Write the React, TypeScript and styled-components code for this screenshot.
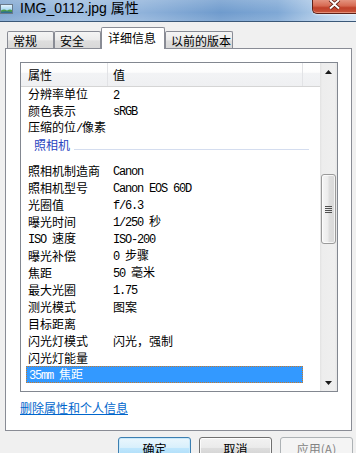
import React from "react";
import styled, { createGlobalStyle, css } from "styled-components";

const GlobalStyle = createGlobalStyle`
  html, body { margin: 0; padding: 0; }
  body {
    width: 356px;
    height: 453px;
    overflow: hidden;
    background: #f0f0f0;
    font-family: "Noto Sans CJK SC", "Liberation Sans", sans-serif;
    font-size: 12px;
    color: #000;
  }
`;

const Window = styled.div`
  width: 356px;
  height: 453px;
  display: flex;
  flex-direction: column;
  background: #f0f0f0;
`;

const TitleBar = styled.div`
  height: 21px;
  flex: none;
  display: flex;
  align-items: flex-start;
  border-bottom: 1px solid #3b5878;
  background:
    linear-gradient(180deg, rgba(255,255,255,0.18) 0%, rgba(255,255,255,0) 60%, rgba(255,255,255,0.12) 100%),
    linear-gradient(90deg, #7ea5d0 0%, #9dbde0 22%, #8fb2da 40%, #6f9bcd 62%, #7fa8d5 78%, #b9d2ec 92%, #d6e5f4 100%);
`;

const TitleIcon = styled.svg`
  width: 13px;
  height: 10px;
  margin-top: 4px;
  flex: none;
`;

const TitleText = styled.div`
  margin-left: 7px;
  font-family: "Liberation Sans", "Noto Sans CJK SC", sans-serif;
  font-size: 14px;
  line-height: 16px;
  color: #000;
  flex: 1;
`;

const CloseButton = styled.div`
  width: 43px;
  height: 13px;
  flex: none;
  border: 1px solid #5e2219;
  border-top: none;
  border-right: none;
  border-bottom-left-radius: 5px;
  background: linear-gradient(180deg, #e4937f 0%, #d66a52 45%, #c0412a 60%, #c9563c 100%);
  box-shadow: inset 0 -1px 0 rgba(255, 200, 180, 0.5), 0 1px 2px rgba(255,255,255,0.6);
  display: flex;
  justify-content: center;
  align-items: flex-start;
`;

const TabStrip = styled.div`
  height: 26px;
  flex: none;
  display: flex;
  align-items: flex-end;
  padding-left: 7px;
`;

const Tab = styled.div<{ $active?: boolean; $w: number }>`
  width: ${(p) => p.$w}px;
  box-sizing: border-box;
  border: 1px solid #898c95;
  border-bottom: none;
  border-radius: 2px 2px 0 0;
  padding-left: 5px;
  font-size: 12px;
  white-space: nowrap;
  ${(p) =>
    p.$active
      ? css`
          height: 22px;
          margin-bottom: -1px;
          position: relative;
          z-index: 2;
          background: #ffffff;
          line-height: 19px;
          padding-left: 6px;
        `
      : css`
          height: 17px;
          line-height: 18px;
          background: linear-gradient(180deg, #f5f5f5 0%, #ebebeb 50%, #dedede 55%, #d8d8d8 100%);
        `}
`;

const Panel = styled.div`
  margin-left: 5px;
  width: 347px;
  height: 383px;
  box-sizing: border-box;
  border: 1px solid #898c95;
  background: #ffffff;
  padding: 13px 0 0 14px;
  flex: none;
`;

const ListBox = styled.div`
  width: 318px;
  height: 330px;
  box-sizing: border-box;
  border: 1px solid #828790;
  display: flex;
  background: #fff;
`;

const ListMain = styled.div`
  flex: 1;
  display: flex;
  flex-direction: column;
  overflow: hidden;
`;

const Header = styled.div`
  height: 24px;
  flex: none;
  display: flex;
  box-sizing: border-box;
  border-bottom: 1px solid #d5d5d5;
  background: linear-gradient(180deg, #ffffff 0%, #fdfdfd 40%, #f2f3f5 45%, #eff0f2 100%);
`;

const HeaderCell = styled.div<{ $w: number; $pad: number }>`
  width: ${(p) => p.$w}px;
  flex: none;
  box-sizing: border-box;
  border-right: 1px solid #e2e3e6;
  padding-left: ${(p) => p.$pad}px;
  line-height: 23px;
  font-size: 12px;
`;

const Rows = styled.div`
  flex: 1;
  overflow: hidden;
  padding-left: 5px;
`;

const Row = styled.div<{ $selected?: boolean }>`
  width: 277px;
  height: 17px;
  box-sizing: border-box;
  display: flex;
  align-items: center;
  line-height: 16px;
  &:first-child {
    height: 15px;
    align-items: flex-start;
    line-height: 14px;
  }
  ${(p) =>
    p.$selected &&
    css`
      background: #3399ff;
      color: #fff;
      border: 1px dotted #c87a2a;
    `}
`;

const LabelCell = styled.div`
  width: 87px;
  flex: none;
  box-sizing: border-box;
  padding-left: 2px;
  white-space: nowrap;
`;

const ValueCell = styled.div`
  flex: 1;
  white-space: nowrap;
`;

const Latin = styled.span`
  font-family: "Liberation Mono", monospace;
  font-size: 12px;
  letter-spacing: -1.2px;
`;

const GroupHeader = styled.div`
  width: 283px;
  height: 26px;
  display: flex;
  padding-left: 8px;
  box-sizing: border-box;
`;

const GroupTitle = styled.div`
  line-height: 17px;
  color: #2a44c0;
  flex: none;
`;

const GroupLine = styled.div`
  flex: 1;
  height: 1px;
  margin: 13px 0 0 4px;
  background: #d4ddef;
`;

const ScrollBar = styled.div`
  width: 17px;
  flex: none;
  display: flex;
  flex-direction: column;
  background: linear-gradient(90deg, #e2e2e2 0%, #ededed 12%, #efefef 85%, #e6e6e6 100%);
`;

const ArrowButton = styled.div`
  height: 17px;
  flex: none;
  display: flex;
  align-items: center;
  justify-content: center;
`;

const Track = styled.div`
  flex: 1;
  display: flex;
  flex-direction: column;
  align-items: center;
`;

const Thumb = styled.div`
  width: 15px;
  height: 70px;
  box-sizing: border-box;
  border: 1px solid #9a9a9a;
  border-radius: 3px;
  background: linear-gradient(90deg, #f6f6f6 0%, #ececec 45%, #dedede 55%, #d9d9d9 100%);
  box-shadow: inset 0 0 0 1px rgba(255,255,255,0.7);
  display: flex;
  flex-direction: column;
  align-items: center;
  justify-content: center;
  gap: 1px;
`;

const GripLine = styled.div`
  width: 7px;
  height: 1px;
  background: #505050;
`;

const LinkRow = styled.div`
  margin-top: 8px;
  line-height: 16px;
`;

const Link = styled.a`
  color: #0066cc;
  text-decoration: underline;
  font-size: 12px;
  cursor: pointer;
`;

const ButtonRow = styled.div`
  margin-top: 6px;
  display: flex;
  justify-content: flex-end;
  gap: 8px;
  padding-right: 3px;
`;

const Button = styled.div<{ $variant?: "default" | "disabled" }>`
  width: 73px;
  height: 23px;
  box-sizing: border-box;
  border-radius: 3px;
  display: flex;
  align-items: center;
  justify-content: center;
  font-size: 12px;
  border: 1px solid #707070;
  background: linear-gradient(180deg, #f2f2f2 0%, #ebebeb 45%, #dddddd 50%, #cfcfcf 100%);
  box-shadow: inset 0 0 0 1px rgba(255,255,255,0.8);
  ${(p) =>
    p.$variant === "default" &&
    css`
      border-color: #3c7fb1;
      background: linear-gradient(180deg, #eaf6fd 0%, #d9f0fc 45%, #bee6fd 50%, #a7d9f5 100%);
      box-shadow: inset 0 0 0 1px #c8e9fb;
    `}
  ${(p) =>
    p.$variant === "disabled" &&
    css`
      border-color: #adb2b5;
      background: #f4f4f4;
      color: #838383;
      box-shadow: none;
    `}
`;

const Mixed: React.FC<{ text: string }> = ({ text }) => {
  const parts = text.split(/([\x20-\x7e]+)/).filter((s) => s.length > 0);
  return (
    <>
      {parts.map((p, i) =>
        /^[\x20-\x7e]+$/.test(p) ? <Latin key={i}>{p}</Latin> : <React.Fragment key={i}>{p}</React.Fragment>
      )}
    </>
  );
};

type Item = { label: string; value: string; selected?: boolean } | { group: string };

const items: Item[] = [
  { label: "分辨率单位", value: "2" },
  { label: "颜色表示", value: "sRGB" },
  { label: "压缩的位/像素", value: "" },
  { group: "照相机" },
  { label: "照相机制造商", value: "Canon" },
  { label: "照相机型号", value: "Canon EOS 60D" },
  { label: "光圈值", value: "f/6.3" },
  { label: "曝光时间", value: "1/250 秒" },
  { label: "ISO 速度", value: "ISO-200" },
  { label: "曝光补偿", value: "0 步骤" },
  { label: "焦距", value: "50 毫米" },
  { label: "最大光圈", value: "1.75" },
  { label: "测光模式", value: "图案" },
  { label: "目标距离", value: "" },
  { label: "闪光灯模式", value: "闪光，强制" },
  { label: "闪光灯能量", value: "" },
  { label: "35mm 焦距", value: "", selected: true },
];

const tabs = [
  { name: "常规", w: 47 },
  { name: "安全", w: 47 },
  { name: "详细信息", w: 64, active: true },
  { name: "以前的版本", w: 68 },
];

export default function App() {
  return (
    <>
      <GlobalStyle />
      <Window>
        <TitleBar>
          <TitleIcon viewBox="0 0 13 10">
            <defs>
              <linearGradient id="sky" x1="0" y1="0" x2="0" y2="1">
                <stop offset="0" stopColor="#e8f6ff" />
                <stop offset="1" stopColor="#7cc4ea" />
              </linearGradient>
            </defs>
            <rect x="0.5" y="0.5" width="12" height="9" fill="url(#sky)" stroke="#6a7a8a" />
            <path d="M1 9 L1 6.5 Q4 4.5 7 6.5 Q10 5 12 6 L12 9 Z" fill="#4d9a4a" />
            <path d="M1 9 L1 7.8 Q6 6.5 12 8 L12 9 Z" fill="#2f6e8f" />
          </TitleIcon>
          <TitleText>IMG_0112.jpg 属性</TitleText>
          <CloseButton>
            <svg width="13" height="10" viewBox="0 0 13 10">
              <path d="M2 0 L6.5 4 L11 0 M2 8.5 L6.5 4.5 L11 8.5" stroke="#5a1a10" strokeWidth="3.6" fill="none" />
              <path d="M2 0 L6.5 4 L11 0 M2 8.5 L6.5 4.5 L11 8.5" stroke="#ffffff" strokeWidth="2" fill="none" />
            </svg>
          </CloseButton>
        </TitleBar>

        <TabStrip>
          {tabs.map((t) => (
            <Tab key={t.name} $w={t.w} $active={t.active}>
              {t.name}
            </Tab>
          ))}
        </TabStrip>

        <Panel>
          <ListBox>
            <ListMain>
              <Header>
                <HeaderCell $w={87} $pad={7}>属性</HeaderCell>
                <HeaderCell $w={195} $pad={5}>值</HeaderCell>
              </Header>
              <Rows>
                {items.map((it, i) =>
                  "group" in it ? (
                    <GroupHeader key={i}>
                      <GroupTitle>{it.group}</GroupTitle>
                      <GroupLine />
                    </GroupHeader>
                  ) : (
                    <Row key={i} $selected={it.selected}>
                      <LabelCell>
                        <Mixed text={it.label} />
                      </LabelCell>
                      <ValueCell>
                        <Mixed text={it.value} />
                      </ValueCell>
                    </Row>
                  )
                )}
              </Rows>
            </ListMain>
            <ScrollBar>
              <ArrowButton>
                <svg width="7" height="4" viewBox="0 0 7 4">
                  <path d="M0 4 L3.5 0 L7 4 Z" fill="#1a1a1a" />
                </svg>
              </ArrowButton>
              <Track>
                <Thumb style={{ marginTop: 94 }}>
                  <GripLine />
                  <GripLine />
                  <GripLine />
                  <GripLine />
                </Thumb>
              </Track>
              <ArrowButton>
                <svg width="7" height="4" viewBox="0 0 7 4">
                  <path d="M0 0 L7 0 L3.5 4 Z" fill="#1a1a1a" />
                </svg>
              </ArrowButton>
            </ScrollBar>
          </ListBox>
          <LinkRow>
            <Link>删除属性和个人信息</Link>
          </LinkRow>
        </Panel>

        <ButtonRow>
          <Button $variant="default">确定</Button>
          <Button>取消</Button>
          <Button $variant="disabled">应用(A)</Button>
        </ButtonRow>
      </Window>
    </>
  );
}
